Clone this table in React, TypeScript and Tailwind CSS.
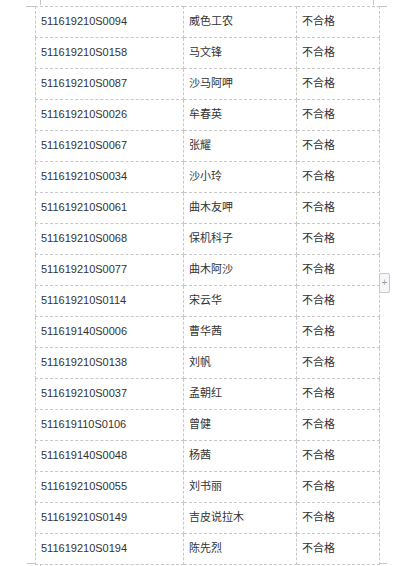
const rows: [string, string][] = [
  ["511619210S0094", "威色工农"],
  ["511619210S0158", "马文锋"],
  ["511619210S0087", "沙马阿呷"],
  ["511619210S0026", "牟春英"],
  ["511619210S0067", "张耀"],
  ["511619210S0034", "沙小玲"],
  ["511619210S0061", "曲木友呷"],
  ["511619210S0068", "保机科子"],
  ["511619210S0077", "曲木阿沙"],
  ["511619210S0114", "宋云华"],
  ["511619140S0006", "曹华茜"],
  ["511619210S0138", "刘帆"],
  ["511619210S0037", "孟朝红"],
  ["511619110S0106", "曾健"],
  ["511619140S0048", "杨茜"],
  ["511619210S0055", "刘书丽"],
  ["511619210S0149", "吉皮说拉木"],
  ["511619210S0194", "陈先烈"],
];

// page corner marks (overlay, outside the text area)
function CornerMarks() {
  return (
    <>
      <div className="absolute left-[40px] top-0 w-px h-[5px] bg-[#c6c6c6]" />
      <div className="absolute left-[26px] top-[6px] w-[9px] h-px bg-[#c6c6c6]" />
      <div className="absolute left-[373px] top-0 w-px h-[5px] bg-[#c6c6c6]" />
      <div className="absolute left-[379px] top-[6px] w-[8px] h-px bg-[#c6c6c6]" />
      <div className="absolute left-[27px] top-[563px] w-[8px] h-px bg-[#c6c6c6]" />
      <div className="absolute left-[40px] top-[564px] w-px h-[2px] bg-[#c6c6c6]" />
      <div className="absolute left-[380px] top-[563px] w-[7px] h-px bg-[#c6c6c6]" />
    </>
  );
}

export default function App() {
  return (
    <div
      className="relative w-[393px] h-[566px] bg-white overflow-hidden text-[11px] text-[#333]"
      style={{ fontFamily: '"Liberation Sans", "Noto Sans CJK SC", sans-serif' }}
    >
      <CornerMarks />

      <div className="pt-[6px] pl-[35px]">
        <table className="border-collapse w-[344px] table-fixed">
          <colgroup>
            <col className="w-[148px]" />
            <col className="w-[113px]" />
            <col className="w-[83px]" />
          </colgroup>
          <tbody>
            {rows.map(([id, name]) => (
              <tr key={id} className="h-[31px]">
                <td className="border border-dashed border-[#c8c8c8] pl-[5px] pb-[2px] align-middle">{id}</td>
                <td className="border border-dashed border-[#c8c8c8] pl-[5px] pb-[2px] align-middle">{name}</td>
                <td className="border border-dashed border-[#c8c8c8] pl-[5px] pb-[2px] align-middle">不合格</td>
              </tr>
            ))}
          </tbody>
        </table>
      </div>

      {/* add column button */}
      <div className="absolute left-[379px] top-[273px] w-[11px] h-[20px] rounded-[2px] border border-[#c8c8c8] bg-[#f7f7f7] flex items-center justify-center text-[10px] text-[#999] leading-none">
        +
      </div>
    </div>
  );
}
